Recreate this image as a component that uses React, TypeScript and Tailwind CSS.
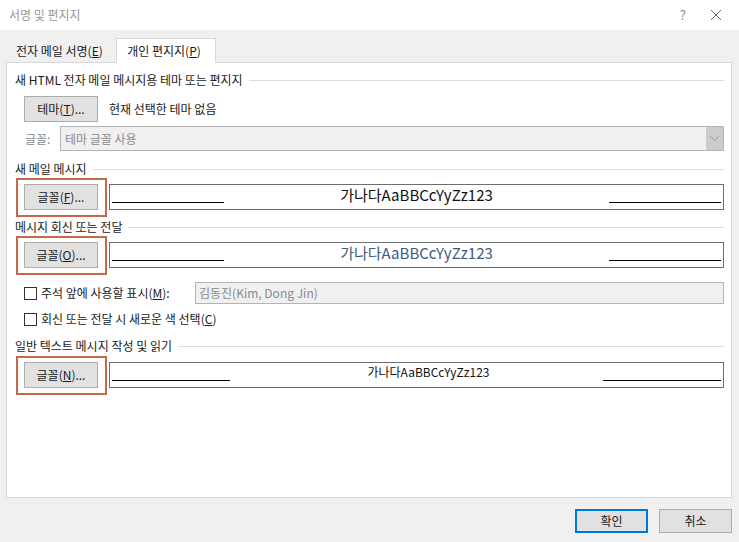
import React from "react";

const font = { fontFamily: '"Noto Sans CJK KR", "Noto Sans", sans-serif' };

function SectionHeader({ title }: { title: string }) {
  return (
    <div className="flex h-[16px] items-center gap-[6px] pr-[7px]">
      <span className="whitespace-nowrap text-[12px] leading-none text-[#1a1a1a]">{title}</span>
      <span className="h-px flex-1 bg-[#dcdcdc]" />
    </div>
  );
}

function Button({ children, className = "" }: { children: React.ReactNode; className?: string }) {
  return (
    <button
      className={`flex h-[26px] w-[74px] items-center justify-center border border-[#adadad] bg-[#e1e1e1] text-[12px] leading-none text-[#1a1a1a] ${className}`}
    >
      {children}
    </button>
  );
}

function FontRow({
  label,
  mnemonic,
  sample,
  sampleClass,
  lineW,
}: {
  label: string;
  mnemonic: string;
  sample: string;
  sampleClass: string;
  lineW: string;
}) {
  return (
    <div className="flex h-[26px] items-stretch pl-[9px] pr-[7px]">
      <div className="relative">
        <Button>
          {label}(<u>{mnemonic}</u>)...
        </Button>
        <span className="pointer-events-none absolute -bottom-[7px] -left-[8px] -right-[9px] -top-[6px] border-2 border-[#c8684b]" />
      </div>
      <div className="ml-[11px] flex flex-1 items-end border border-[#6e6e6e] bg-white px-[2px] pb-[6px]">
        <span className={`h-px bg-black ${lineW}`} />
        <span className={`flex-1 self-center text-center leading-none ${sampleClass}`}>{sample}</span>
        <span className={`h-px bg-black ${lineW}`} />
      </div>
    </div>
  );
}

function Checkbox() {
  return <span className="inline-block h-[13px] w-[13px] border border-[#333] bg-white" />;
}

export default function App() {
  return (
    <div style={font} className="flex h-[542px] w-[739px] flex-col bg-[#f0f0f0]">
      {/* title bar */}
      <div className="flex h-[30px] items-center bg-white pl-[9px]">
        <span className="text-[12px] text-[#999]">서명 및 편지지</span>
        <span className="ml-auto mr-[24px] text-[13px] text-[#888]">?</span>
        <svg width="12" height="12" viewBox="0 0 12 12" className="mr-[17px]">
          <path d="M1 1 L11 11 M11 1 L1 11" stroke="#666" strokeWidth="1" fill="none" />
        </svg>
      </div>

      <div className="flex flex-1 flex-col px-[6px] pt-[8px]">
        {/* tabs */}
        <div className="flex h-[24px] items-end">
          <div className="flex h-[22px] w-[110px] items-center pl-[10px] text-[12px] text-[#1a1a1a]">
            전자 메일 서명(<u>E</u>)
          </div>
          <div className="relative z-10 -mb-px flex h-[25px] w-[100px] items-center justify-center border border-b-0 border-[#d9d9d9] bg-white pr-[4px] text-[12px] text-[#1a1a1a]">
            개인 편지지(<u>P</u>)
          </div>
        </div>

        {/* panel */}
        <div className="flex h-[436px] w-[726px] flex-col border border-[#d9d9d9] bg-white pl-[8px]">
          <div className="mt-[9px]">
            <SectionHeader title="새 HTML 전자 메일 메시지용 테마 또는 편지지" />
          </div>

          <div className="mt-[8px] flex h-[25px] items-center pl-[9px]">
            <Button className="h-[25px]">
              테마(<u>T</u>)...
            </Button>
            <span className="ml-[11px] text-[12px] text-[#1a1a1a]">현재 선택한 테마 없음</span>
          </div>

          <div className="mt-[5px] flex h-[25px] items-center pr-[7px]">
            <span className="w-[45px] pl-[10px] text-[12px] text-[#8a8a8a]">글꼴:</span>
            <div className="flex h-[25px] flex-1 items-stretch border border-[#b4b4b4] bg-[#f0f0f0]">
              <span className="flex flex-1 items-center pl-[4px] text-[12px] text-[#8a8a8a]">테마 글꼴 사용</span>
              <span className="flex w-[17px] items-center justify-center bg-[#cccccc]">
                <svg width="9" height="5" viewBox="0 0 9 5">
                  <path d="M0.5 0.5 L4.5 4.5 L8.5 0.5" stroke="#9a9a9a" strokeWidth="1" fill="none" />
                </svg>
              </span>
            </div>
          </div>

          <div className="mt-[10px]">
            <SectionHeader title="새 메일 메시지" />
          </div>
          <div className="mt-[7px]">
            <FontRow
              label="글꼴"
              mnemonic="F"
              sample="가나다AaBBCcYyZz123"
              sampleClass="text-[15px] text-[#111]"
              lineW="w-[112px]"
            />
          </div>

          <div className="mt-[9px]">
            <SectionHeader title="메시지 회신 또는 전달" />
          </div>
          <div className="mt-[7px]">
            <FontRow
              label="글꼴"
              mnemonic="O"
              sample="가나다AaBBCcYyZz123"
              sampleClass="text-[15px] text-[#3f5a7f]"
              lineW="w-[112px]"
            />
          </div>

          <div className="mt-[14px] flex h-[22px] items-center pl-[9px] pr-[7px]">
            <Checkbox />
            <span className="ml-[4px] w-[154px] text-[12px] text-[#1a1a1a]">
              주석 앞에 사용할 표시(<u>M</u>):
            </span>
            <div className="flex h-[22px] flex-1 items-center border border-[#b4b4b4] bg-[#f0f0f0] pl-[3px] text-[12px] text-[#8a8a8a]">
              김동진(Kim, Dong Jin)
            </div>
          </div>

          <div className="mt-[4px] flex h-[22px] items-center pl-[9px]">
            <Checkbox />
            <span className="ml-[4px] text-[12px] text-[#1a1a1a]">
              회신 또는 전달 시 새로운 색 선택(<u>C</u>)
            </span>
          </div>

          <div className="mt-[8px]">
            <SectionHeader title="일반 텍스트 메시지 작성 및 읽기" />
          </div>
          <div className="mt-[8px]">
            <FontRow
              label="글꼴"
              mnemonic="N"
              sample="가나다AaBBCcYyZz123"
              sampleClass="pl-[24px] text-[12px] text-[#111]"
              lineW="w-[118px]"
            />
          </div>
        </div>

        {/* footer buttons */}
        <div className="mt-[11px] flex justify-end gap-[11px] pr-[1px]">
          <button className="flex h-[24px] w-[73px] items-center justify-center border-2 border-[#0078d7] bg-[#e1e1e1] text-[12px] text-[#1a1a1a]">
            확인
          </button>
          <button className="flex h-[24px] w-[73px] items-center justify-center border border-[#adadad] bg-[#e1e1e1] text-[12px] text-[#1a1a1a]">
            취소
          </button>
        </div>
      </div>
    </div>
  );
}
